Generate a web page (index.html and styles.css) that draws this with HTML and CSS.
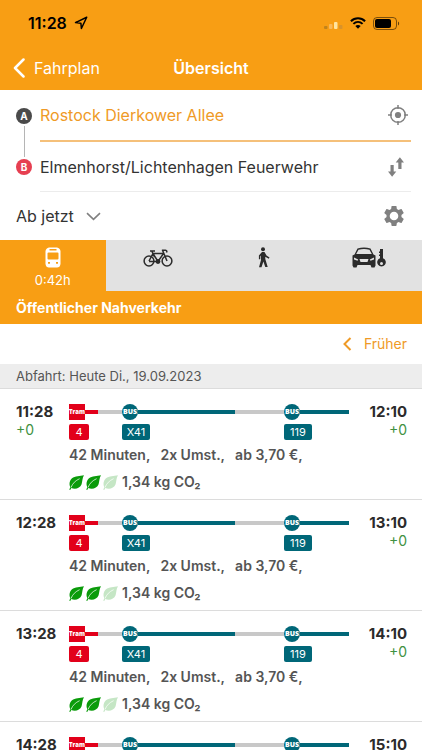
FILE: index.html
```html
<!DOCTYPE html>
<html lang="de">
<head>
    <meta charset="UTF-8">
    <meta name="viewport" content="width=device-width, initial-scale=1.0">
    <title>Übersicht</title>
    <link rel="stylesheet" href="styles.css">
</head>
<body>

    <!-- Shared icons -->
    <svg class="sprite" aria-hidden="true">
        <symbol id="leaf" viewBox="0 0 15 15">
            <path d="M15 0.200C11 1.200 6 0.800 3 3.200C0.300 5.500 0 9.500 1.300 12L0.300 14.700L1.200 15L2.300 12.900C6 14.700 11 13.300 12.600 9.200C13.500 6 13.300 2.800 15 0.200Z" fill="currentColor"/>
            <path d="M2 12.500C3.500 8.500 6.500 5.500 10.600 3.700" fill="none" stroke="#fff" stroke-width="0.700"/>
        </symbol>
    </svg>

    <div class="app">
        <header class="header">
            <div class="status">
                <span class="clock">11:28</span>
                <svg width="14" height="14" viewBox="0 0 14 14"><path d="M12.700 1.300L1.500 6.600L6.900 7.200L7.400 12.500Z" fill="none" stroke="#000" stroke-width="1.500" stroke-linejoin="round"/></svg>
                <svg class="signal" width="19" height="8" viewBox="0 0 19 8">
                    <rect x="0" y="5" width="3.500" height="3" rx="1" fill="#c1831c"/>
                    <rect x="5" y="3" width="3.500" height="5" rx="1" fill="#fbb95a"/>
                    <rect x="10" y="1" width="3.500" height="7" rx="1" fill="#ffe4a0"/>
                    <rect x="15" y="4" width="3.500" height="4" rx="1" fill="#d9932a"/>
                </svg>
                <svg width="16" height="12" viewBox="0 0 16 12">
                    <path d="M0.900 4.200C4.900 0.300 11.100 0.300 15.100 4.200M3.400 6.900C6.100 4.300 9.900 4.300 12.600 6.900" fill="none" stroke="#000" stroke-width="2"/>
                    <path d="M5.300 9C6.900 7.500 9.100 7.500 10.700 9L8 11.800Z" fill="#000"/>
                </svg>
                <svg width="27" height="13" viewBox="0 0 27 13">
                    <rect x="0.500" y="0.500" width="23" height="12" rx="3.500" fill="none" stroke="#000" stroke-opacity="0.500"/>
                    <rect x="2" y="2" width="16" height="9" rx="2" fill="#000"/>
                    <path d="M25 4.500C26.500 5 26.500 8 25 8.500Z" fill="#000" fill-opacity="0.600"/>
                </svg>
            </div>
            <nav class="navbar">
                <a class="back" href="#">
                    <svg width="13" height="20" viewBox="0 0 13 20"><path d="M10.500 1.500L2 10L10.500 18.500" fill="none" stroke="#fff" stroke-width="2.500" stroke-linecap="round" stroke-linejoin="round"/></svg>
                    Fahrplan
                </a>
                <h1>Übersicht</h1>
            </nav>
        </header>

        <form class="search">
            <div class="route">
                <div class="markers">
                    <label class="marker" for="from">A</label>
                    <span class="connector"></span>
                    <label class="marker marker-b" for="to">B</label>
                </div>
                <div class="fields">
                    <div class="field active">
                        <input type="text" id="from" name="from" value="Rostock Dierkower Allee">
                        <button type="button" class="icon-button" aria-label="Standort">
                            <svg width="20" height="20" viewBox="0 0 20 20"><circle cx="10" cy="10" r="7.300" fill="none" stroke="#808080" stroke-width="1.500"/><circle cx="10" cy="10" r="3.100" fill="#808080"/><path d="M10 0V4M10 16V20M0 10H4M16 10H20" stroke="#808080" stroke-width="1.500"/></svg>
                        </button>
                    </div>
                    <div class="field">
                        <input type="text" id="to" name="to" value="Elmenhorst/Lichtenhagen Feuerwehr">
                        <button type="button" class="icon-button swap" aria-label="Tauschen">
                            <svg width="16" height="20" viewBox="0 0 16 20"><path d="M2.500 8H5.700V14.500H8.300L4.100 19.700L0 14.500H2.500ZM10.300 12H13.500V5.500H16L11.900 0.300L7.700 5.500H10.300Z" fill="#808080"/></svg>
                        </button>
                    </div>
                </div>
            </div>
            <div class="options">
                <button type="button" class="when">
                    Ab jetzt
                    <svg width="15" height="9" viewBox="0 0 15 9"><path d="M1 1.200L7.500 7.300L14 1.200" fill="none" stroke="#808080" stroke-width="1.600"/></svg>
                </button>
                <button type="button" class="icon-button" aria-label="Einstellungen">
                    <svg width="20" height="20" viewBox="2 2 20 20"><path fill="#808080" d="M19.430 12.980c.04-.32.07-.64.07-.98s-.03-.66-.07-.98l2.110-1.650c.19-.15.24-.42.12-.64l-2-3.460c-.12-.22-.39-.3-.61-.22l-2.490 1c-.52-.4-1.080-.73-1.690-.98l-.38-2.650C14.460 2.180 14.250 2 14 2h-4c-.25 0-.46.18-.49.42l-.38 2.650c-.61.25-1.170.59-1.690.98l-2.490-1c-.23-.09-.49 0-.61.22l-2 3.460c-.13.22-.07.49.12.64l2.110 1.650c-.04.32-.07.65-.07.98s.03.66.07.98l-2.110 1.650c-.19.15-.24.42-.12.64l2 3.460c.12.22.39.3.61.22l2.490-1c.52.4 1.080.73 1.690.98l.38 2.650c.03.24.24.42.49.42h4c.25 0 .46-.18.49-.42l.38-2.650c.61-.25 1.170-.59 1.690-.98l2.490 1c.23.09.49 0 .61-.22l2-3.460c.12-.22.07-.49-.12-.64l-2.110-1.650zM12 16.300a4.300 4.300 0 1 1 0-8.600 4.300 4.300 0 0 1 0 8.600z"/></svg>
                </button>
            </div>
        </form>

        <div class="tabs">
            <button type="button" class="tab selected">
                <svg width="16" height="21" viewBox="0 0 16 21"><path fill="#fff" fill-rule="evenodd" d="M4 0.500H12Q15 1 15.500 4V17Q15 20.500 12 20.500H4Q1 20.500 0.500 17V4Q1 1 4 0.500ZM4.500 2V3.500H11.500V2ZM3.500 5.500Q2.500 5.500 2.500 6.500V11.500Q2.500 12.500 3.500 12.500H12.500Q13.500 12.500 13.500 11.500V6.500Q13.500 5.500 12.500 5.500ZM3 15V16.800H5V15ZM11 15V16.800H13V15Z"/></svg>
                0:42h
            </button>
            <button type="button" class="tab" aria-label="Fahrrad">
                <svg width="30" height="21" viewBox="0 0 30 21"><g fill="none" stroke="#2b2b2b" stroke-width="1.500" stroke-linejoin="round"><circle cx="6" cy="14" r="4.900"/><circle cx="24" cy="14" r="4.900"/><path d="M6 14L10 6.500H20.500L15 14.500H6M10 6.500L15 14.500M9 4.500L11.500 10M7 4H12M24 14L19.500 3.200H22.500Q24.500 3.500 23.500 5.500"/><circle cx="15" cy="14.500" r="1.700" fill="#2b2b2b"/></g></svg>
            </button>
            <button type="button" class="tab" aria-label="Zu Fuß">
                <svg width="12" height="21" viewBox="0 0 12 21"><circle cx="5" cy="2.200" r="2" fill="#2b2b2b"/><path d="M4 5H6.500L8.500 8.500L11.500 10.500L10.800 11.700L7.300 9.800V12L9.700 20H7.300L5.400 14.500L3.500 20.200H1L3 13V8.500L2.300 9.500V12.300H0.900V8.500Z" fill="#2b2b2b"/></svg>
            </button>
            <button type="button" class="tab" aria-label="Carsharing">
                <svg width="34" height="21" viewBox="0 0 34 21"><path fill="#2b2b2b" fill-rule="evenodd" d="M5.500 1.500Q12 -0.500 18.500 1.500L21.500 7.500L23.500 8.500V18.500L22.500 20.500H19.500L18.500 18H5.500L4.500 20.500H1.500L0.500 18.500V8.500L2.500 7.500ZM6.500 2.700L4.200 7H19.800L17.500 2.700Q12 1.300 6.500 2.700ZM2 10.500V12.500L5.500 13.700L6.200 12.500ZM22 10.500V12.500L18.500 13.700L17.800 12.500ZM7.500 12L8.500 15H15.500L16.500 12Z"/><path fill="#2b2b2b" fill-rule="evenodd" d="M28 2H31V11.200A4.300 4.300 0 1 1 28 11.200V9H27V7.500H28V6H27V4.500H28ZM29.500 15A1.500 1.500 0 1 0 29.500 18A1.500 1.500 0 1 0 29.500 15Z"/></svg>
            </button>
        </div>

        <h2 class="section-title">Öffentlicher Nahverkehr</h2>

        <div class="earlier">
            <a href="#">
                <svg width="9" height="14" viewBox="0 0 9 14"><path d="M7.500 1L1.500 7L7.500 13" fill="none" stroke="#ef9a26" stroke-width="2"/></svg>
                Früher
            </a>
        </div>

        <div class="date">Abfahrt: Heute Di., 19.09.2023</div>

        <main class="trips">
            <article class="trip">
                <div class="time"><b>11:28</b><span>+0</span></div>
                <div class="details">
                    <div class="legs">
                        <div class="leg tram"><div class="track"><span class="stop">Tram</span></div><span class="line">4</span></div>
                        <div class="leg walk"><div class="track"></div></div>
                        <div class="leg bus"><div class="track"><span class="stop">BUS</span></div><span class="line">X41</span></div>
                        <div class="leg walk"><div class="track"></div></div>
                        <div class="leg bus"><div class="track"><span class="stop">BUS</span></div><span class="line">119</span></div>
                    </div>
                    <p class="summary"><span>42 Minuten,</span><span>2x Umst.,</span><span>ab 3,70 €,</span></p>
                    <p class="co2"><svg><use href="#leaf"/></svg><svg><use href="#leaf"/></svg><svg class="off"><use href="#leaf"/></svg><span>1,34 kg CO₂</span></p>
                </div>
                <div class="time arrival"><b>12:10</b><span>+0</span></div>
            </article>

            <article class="trip">
                <div class="time"><b>12:28</b></div>
                <div class="details">
                    <div class="legs">
                        <div class="leg tram"><div class="track"><span class="stop">Tram</span></div><span class="line">4</span></div>
                        <div class="leg walk"><div class="track"></div></div>
                        <div class="leg bus"><div class="track"><span class="stop">BUS</span></div><span class="line">X41</span></div>
                        <div class="leg walk"><div class="track"></div></div>
                        <div class="leg bus"><div class="track"><span class="stop">BUS</span></div><span class="line">119</span></div>
                    </div>
                    <p class="summary"><span>42 Minuten,</span><span>2x Umst.,</span><span>ab 3,70 €,</span></p>
                    <p class="co2"><svg><use href="#leaf"/></svg><svg><use href="#leaf"/></svg><svg class="off"><use href="#leaf"/></svg><span>1,34 kg CO₂</span></p>
                </div>
                <div class="time arrival"><b>13:10</b><span>+0</span></div>
            </article>

            <article class="trip">
                <div class="time"><b>13:28</b></div>
                <div class="details">
                    <div class="legs">
                        <div class="leg tram"><div class="track"><span class="stop">Tram</span></div><span class="line">4</span></div>
                        <div class="leg walk"><div class="track"></div></div>
                        <div class="leg bus"><div class="track"><span class="stop">BUS</span></div><span class="line">X41</span></div>
                        <div class="leg walk"><div class="track"></div></div>
                        <div class="leg bus"><div class="track"><span class="stop">BUS</span></div><span class="line">119</span></div>
                    </div>
                    <p class="summary"><span>42 Minuten,</span><span>2x Umst.,</span><span>ab 3,70 €,</span></p>
                    <p class="co2"><svg><use href="#leaf"/></svg><svg><use href="#leaf"/></svg><svg class="off"><use href="#leaf"/></svg><span>1,34 kg CO₂</span></p>
                </div>
                <div class="time arrival"><b>14:10</b><span>+0</span></div>
            </article>

            <article class="trip">
                <div class="time"><b>14:28</b></div>
                <div class="details">
                    <div class="legs">
                        <div class="leg tram"><div class="track"><span class="stop">Tram</span></div></div>
                        <div class="leg walk"><div class="track"></div></div>
                        <div class="leg bus"><div class="track"><span class="stop">BUS</span></div></div>
                        <div class="leg walk"><div class="track"></div></div>
                        <div class="leg bus"><div class="track"><span class="stop">BUS</span></div></div>
                    </div>
                </div>
                <div class="time arrival"><b>15:10</b></div>
            </article>
        </main>
    </div>

</body>
</html>
```

FILE: styles.css
```css
* {
    box-sizing: border-box;
}

body {
    font-family: Inter, "Liberation Sans", sans-serif;
    font-size: 16px;
    color: #333;
    background-color: #fff;
    margin: 0;
}

h1, h2, p {
    margin: 0;
}

svg {
    display: block;
    flex: none;
}

a {
    text-decoration: none;
}

button {
    font: inherit;
    color: inherit;
    background: none;
    border: none;
    padding: 0;
    cursor: pointer;
}

.sprite {
    position: absolute;
    width: 0;
    height: 0;
}

.app {
    height: 100vh;
    overflow: hidden;
}

/* Header */
.header {
    background-color: #f89e14;
    color: #fff;
}

.status {
    display: flex;
    align-items: center;
    gap: 7px;
    height: 46px;
    padding: 0 22px 0 28px;
    color: #000;
}

.clock {
    font-size: 16px;
    font-weight: 600;
}

.signal {
    margin-left: auto;
    margin-top: 4px;
}

.navbar {
    display: grid;
    grid-template-columns: 1fr auto 1fr;
    align-items: center;
    height: 44px;
    padding: 0 13px;
}

.back {
    display: flex;
    align-items: center;
    gap: 8px;
    color: #fff;
}

.navbar h1 {
    font-size: 16px;
    font-weight: 600;
}

/* Search form */
.search {
    padding-left: 16px;
}

.route {
    display: flex;
    gap: 8px;
}

.markers {
    display: flex;
    flex-direction: column;
    align-items: center;
    gap: 2px;
    padding: 18px 0 17px;
}

.marker {
    width: 16px;
    height: 16px;
    border-radius: 50%;
    background-color: #4a4a4a;
    color: #fff;
    font-size: 10px;
    font-weight: 700;
    line-height: 16px;
    text-align: center;
}

.marker-b {
    background-color: #e63f51;
}

.connector {
    flex: 1;
    width: 1px;
    background-color: #b5b5b5;
}

.fields {
    flex: 1;
    padding-right: 11px;
}

.field {
    display: flex;
    align-items: center;
    height: 50px;
    padding-right: 3px;
    border-bottom: 1px solid #ececec;
}

.field.active {
    height: 52px;
    border-bottom: 2px solid #f5c07a;
}

.field input {
    flex: 1;
    min-width: 0;
    padding: 0;
    border: none;
    outline: none;
    background: none;
    font: inherit;
    color: #333;
}

.field.active input {
    color: #ef9a26;
}

.swap {
    padding-right: 4px;
}

.options {
    display: flex;
    justify-content: space-between;
    align-items: center;
    height: 48px;
    padding-right: 18px;
}

.when {
    display: flex;
    align-items: center;
    gap: 12px;
}

/* Transport modes */
.tabs {
    display: grid;
    grid-template-columns: repeat(4, 1fr);
    height: 51px;
    background-color: #e2e2e2;
}

.tab {
    display: flex;
    flex-direction: column;
    align-items: center;
    gap: 4px;
    padding-top: 7px;
    font-size: 13px;
    line-height: 16px;
}

.tab.selected {
    background-color: #f89e14;
    color: #fff;
}

.section-title {
    padding: 0 16px;
    background-color: #f89e14;
    color: #fff;
    font-size: 14px;
    font-weight: 700;
    line-height: 33px;
}

.earlier {
    display: flex;
    justify-content: flex-end;
    padding: 0 15px;
    font-size: 14px;
    line-height: 40px;
}

.earlier a {
    display: flex;
    align-items: center;
    gap: 12px;
    color: #ef9a26;
}

.date {
    padding: 0 16px;
    background-color: #ededed;
    border-bottom: 1px solid #dcdcdc;
    color: #555;
    font-size: 13px;
    line-height: 24px;
}

/* Trips */
.trip {
    display: flex;
    height: 111px;
    padding: 14px 15px 0 16px;
    border-bottom: 1px solid #dcdcdc;
}

.time {
    display: flex;
    flex-direction: column;
    width: 53px;
    font-size: 14px;
    line-height: 18px;
}

.time b {
    color: #2b2b2b;
    font-size: 15px;
    font-weight: 700;
}

.time span {
    color: #3f9142;
}

.arrival {
    width: 58px;
    text-align: right;
}

.details {
    flex: 1;
    padding-top: 1px;
}

.legs {
    display: grid;
    grid-template-columns: 29fr 24fr 113fr 49fr 65fr;
    height: 39px;
}

.leg {
    min-width: 0;
}

.track {
    display: flex;
    align-items: center;
    height: 16px;
    margin-bottom: 4px;
}

.track::after {
    content: "";
    flex: 1;
    height: 4px;
    background-color: #c8c8c8;
}

.tram .track::after,
.tram .stop,
.tram .line {
    background-color: #e2001a;
}

.bus .track::after,
.bus .stop,
.bus .line {
    background-color: #006778;
}

.stop {
    width: 16px;
    height: 16px;
    color: #fff;
    font-family: "Open Sans", sans-serif;
    font-size: 7px;
    font-weight: 800;
    line-height: 16px;
    text-align: center;
}

.tram .stop {
    font-size: 6px;
}

.bus .stop {
    border-radius: 50%;
}

.line {
    display: inline-block;
    min-width: 20px;
    padding: 0 4px;
    border-radius: 2px;
    color: #fff;
    font-size: 11px;
    line-height: 16px;
    text-align: center;
    vertical-align: top;
}

.bus .line {
    min-width: 28px;
}

.summary {
    display: flex;
    gap: 10px;
    color: #555;
    font-size: 14px;
    font-weight: 600;
    line-height: 24px;
    white-space: nowrap;
}

.co2 {
    display: flex;
    align-items: center;
    gap: 2px;
    color: #555;
    font-size: 14px;
    font-weight: 600;
    line-height: 30px;
}

.co2 svg {
    width: 15px;
    height: 15px;
    color: #0a9b0a;
}

.co2 .off {
    color: #c5e6c5;
}

.co2 span {
    padding-left: 2px;
}
```
